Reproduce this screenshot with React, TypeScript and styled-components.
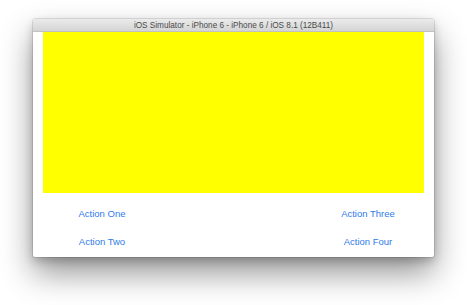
import React from "react";
import styled, { createGlobalStyle } from "styled-components";

const GlobalStyle = createGlobalStyle`
  html, body {
    margin: 0;
    padding: 0;
    background: #ffffff;
  }
  body {
    font-family: "Liberation Sans", Arial, sans-serif;
  }
`;

const Page = styled.div`
  width: 467px;
  height: 305px;
  padding: 19px 0 0 33px;
  box-sizing: border-box;
  overflow: hidden;
`;

const SimWindow = styled.div`
  width: 401px;
  height: 238px;
  display: flex;
  flex-direction: column;
  background: #ffffff;
  border-radius: 3px 3px 2px 2px;
  box-shadow: 0 0 0 1px rgba(0, 0, 0, 0.1), 0 16px 32px rgba(0, 0, 0, 0.42),
    0 4px 10px rgba(0, 0, 0, 0.2);
  overflow: hidden;
`;

const TitleBar = styled.div`
  height: 12px;
  flex: none;
  display: flex;
  align-items: center;
  justify-content: center;
  background: linear-gradient(#ebebeb, #d4d4d4);
  border-bottom: 1px solid #c2c2c2;
  font-size: 8.2px;
  color: #4a4a4a;
  white-space: nowrap;
`;

const Screen = styled.div`
  flex: 1;
  display: flex;
  flex-direction: column;
  padding: 0 10px;
`;

const YellowView = styled.div`
  height: 161px;
  background: #ffff00;
`;

const ActionGrid = styled.div`
  display: grid;
  grid-template-columns: 100px 100px;
  grid-auto-rows: 28px;
  justify-content: space-between;
  padding: 6px 6px 0 9px;
`;

const ActionButton = styled.button`
  border: none;
  background: none;
  padding: 0;
  font-family: "Liberation Sans", Arial, sans-serif;
  font-size: 9.5px;
  color: #2f7bea;
  text-align: center;
  cursor: pointer;
`;

export default function App() {
  return (
    <>
      <GlobalStyle />
      <Page>
        <SimWindow>
          <TitleBar>iOS Simulator - iPhone 6 - iPhone 6 / iOS 8.1 (12B411)</TitleBar>
          <Screen>
            <YellowView />
            <ActionGrid>
              <ActionButton>Action One</ActionButton>
              <ActionButton>Action Three</ActionButton>
              <ActionButton>Action Two</ActionButton>
              <ActionButton>Action Four</ActionButton>
            </ActionGrid>
          </Screen>
        </SimWindow>
      </Page>
    </>
  );
}
